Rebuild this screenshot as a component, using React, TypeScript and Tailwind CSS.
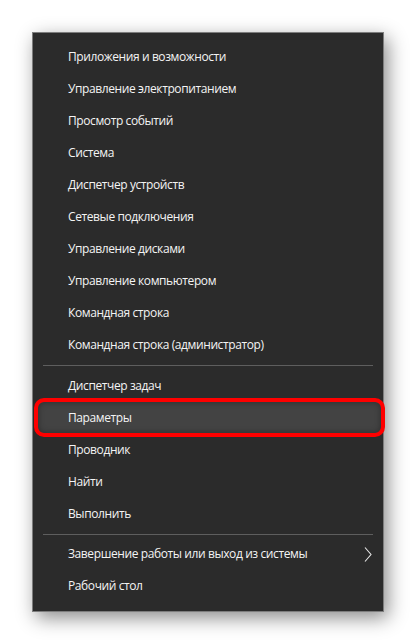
import React from "react";

const group1 = [
  "Приложения и возможности",
  "Управление электропитанием",
  "Просмотр событий",
  "Система",
  "Диспетчер устройств",
  "Сетевые подключения",
  "Управление дисками",
  "Управление компьютером",
  "Командная строка",
  "Командная строка (администратор)",
];
const group2 = ["Диспетчер задач", "Параметры", "Проводник", "Найти", "Выполнить"];

function Row({ label, highlight, chevron }: { label: string; highlight?: boolean; chevron?: boolean }) {
  return (
    <div className="relative h-[32px] flex items-center pl-[35px] pr-[11px]">
      {highlight && (
        <div className="absolute left-[1px] right-[-2px] top-[-4px] bottom-[-3px] rounded-[10px] border-[4px] border-[#ff0000] bg-[#434343] shadow-[inset_0_0_6px_rgba(0,0,0,0.35)]" />
      )}
      <span className="relative flex-1 text-[12px] tracking-[-0.4px] text-[#f4f4f4] leading-none">{label}</span>
      {chevron && (
        <svg className="relative" width="8" height="15" viewBox="0 0 8 15">
          <polyline points="1,0.5 7,7.5 1,14.5" fill="none" stroke="#e8e8e8" strokeWidth="1.1" />
        </svg>
      )}
    </div>
  );
}

export default function App() {
  return (
    <div
      className="w-[416px] h-[644px] bg-white pt-[32px] pl-[32px]"
      style={{ fontFamily: '"Open Sans", "Noto Sans", sans-serif' }}
    >
      <div className="w-[352px] h-[580px] bg-[#2b2b2b] border border-[#7d7d7d] py-[8px] shadow-[4px_6px_18px_rgba(0,0,0,0.45)]">
        {group1.map((l) => (
          <Row key={l} label={l} />
        ))}
        <div className="mx-[10px] my-[4px] h-px bg-[#5e5e5e]" />
        {group2.map((l) => (
          <Row key={l} label={l} highlight={l === "Параметры"} />
        ))}
        <div className="mx-[10px] mt-[4px] mb-[3px] h-px bg-[#5e5e5e]" />
        <Row label="Завершение работы или выход из системы" chevron />
        <Row label="Рабочий стол" />
      </div>
    </div>
  );
}
